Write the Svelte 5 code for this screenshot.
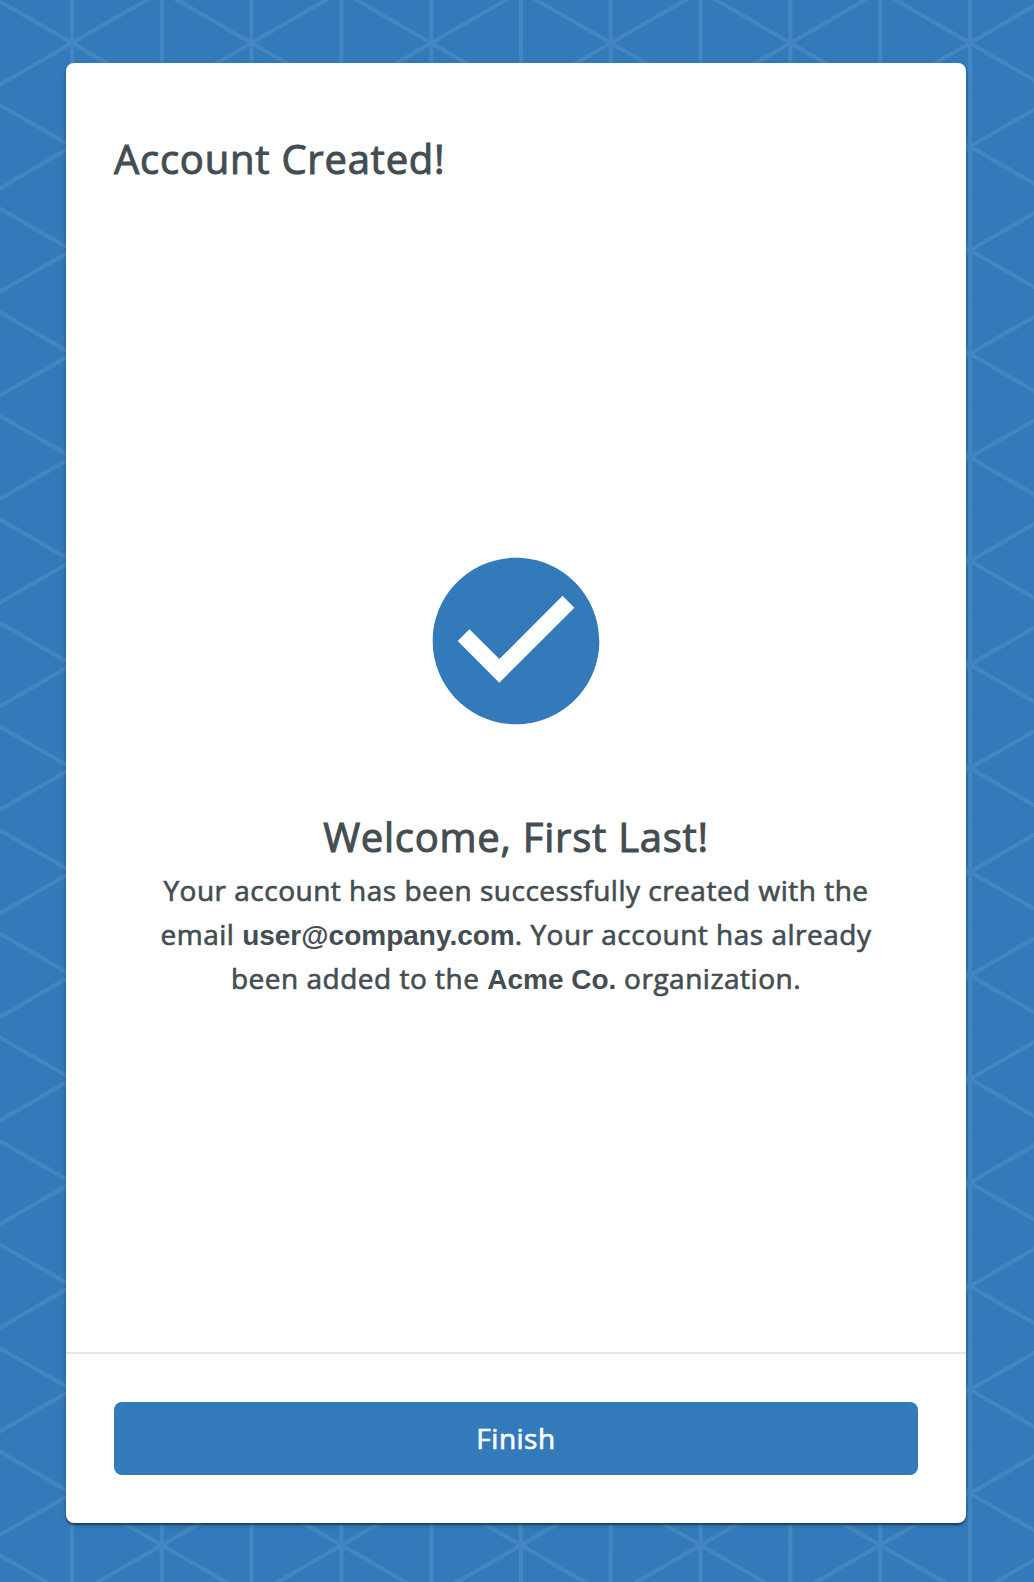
<script>
  const email = 'user@company.com';
  const organization = 'Acme Co.';
  const name = 'First Last';
</script>

<main class="page">
  <svg class="backdrop" aria-hidden="true">
    <defs>
      <pattern id="triangles" x="-17.8" y="-8.8" width="179.6" height="103.6" patternUnits="userSpaceOnUse">
        <path
          d="M0 -10V114M89.8 -10V114M179.6 -10V114M-89.8 -51.8L269.4 155.4M-89.8 51.8L89.8 155.4M89.8 -51.8L269.4 51.8M269.4 -51.8L-89.8 155.4M89.8 -51.8L-89.8 51.8M269.4 51.8L89.8 155.4"
        />
      </pattern>
    </defs>
    <rect width="100%" height="100%" fill="url(#triangles)" />
  </svg>

  <section class="card">
    <header><h1>Account Created!</h1></header>
    <div class="content">
      <svg class="check" viewBox="0 0 24 24" aria-hidden="true">
        <path d="M12 2C6.48 2 2 6.48 2 12s4.48 10 10 10 10-4.48 10-10S17.52 2 12 2zm-2 15l-5-5 1.41-1.41L10 14.17l7.59-7.59L19 8l-9 9z" />
      </svg>
      <h2>Welcome, {name}!</h2>
      <p>
        Your account has been successfully created with the email <strong>{email}</strong>. Your
        account has already been added to the <strong>{organization}</strong> organization.
      </p>
    </div>
    <footer><button type="button">Finish</button></footer>
  </section>
</main>

<style>
  :global(body) {
    margin: 0;
    background: #337aba;
  }

  .page {
    display: grid;
    height: 1582px;
    overflow: hidden;
    color: #434d52;
    font-family: 'Open Sans', sans-serif;
    font-weight: 400;
  }

  .backdrop {
    grid-area: 1 / 1;
    width: 100%;
    height: 100%;
  }

  .backdrop path {
    fill: none;
    stroke: #4486c1;
    stroke-width: 4;
  }

  .card {
    grid-area: 1 / 1;
    position: relative;
    display: flex;
    flex-direction: column;
    box-sizing: border-box;
    margin: 63px 68px 59px 66px;
    border-radius: 8px;
    background: #fff;
    box-shadow:
      0 2px 2px rgba(0, 0, 0, 0.45),
      0 2px 6px rgba(0, 0, 0, 0.12);
  }

  header {
    padding: 68px 48px 0;
  }

  h1,
  h2 {
    margin: 0;
    font-size: 40px;
    font-weight: 400;
    line-height: 56px;
    letter-spacing: 0.75px;
    -webkit-text-stroke: 1px currentColor;
  }

  .content {
    flex: 1;
    display: flex;
    flex-direction: column;
    align-items: center;
    padding: 354px 80px 0;
    text-align: center;
  }

  .check {
    width: 200px;
    height: 200px;
    margin-bottom: 68px;
    fill: #337aba;
  }

  p {
    width: 740px;
    margin: 3px 0 0;
    font-size: 28px;
    line-height: 44px;
    letter-spacing: 0.5px;
    -webkit-text-stroke: 0.65px currentColor;
  }

  strong {
    font-family: 'Liberation Sans', sans-serif;
    font-weight: 700;
    line-height: 1;
    letter-spacing: 0;
    -webkit-text-stroke: 0;
  }

  footer {
    padding: 48px;
    border-top: 2px solid #e6e6e6;
  }

  button {
    display: block;
    width: 100%;
    height: 73px;
    padding: 0;
    border: 0;
    border-radius: 8px;
    background: #337aba;
    color: #fff;
    font: 400 28px/73px 'Open Sans', sans-serif;
    letter-spacing: 0.5px;
    -webkit-text-stroke: 0.65px currentColor;
  }
</style>
